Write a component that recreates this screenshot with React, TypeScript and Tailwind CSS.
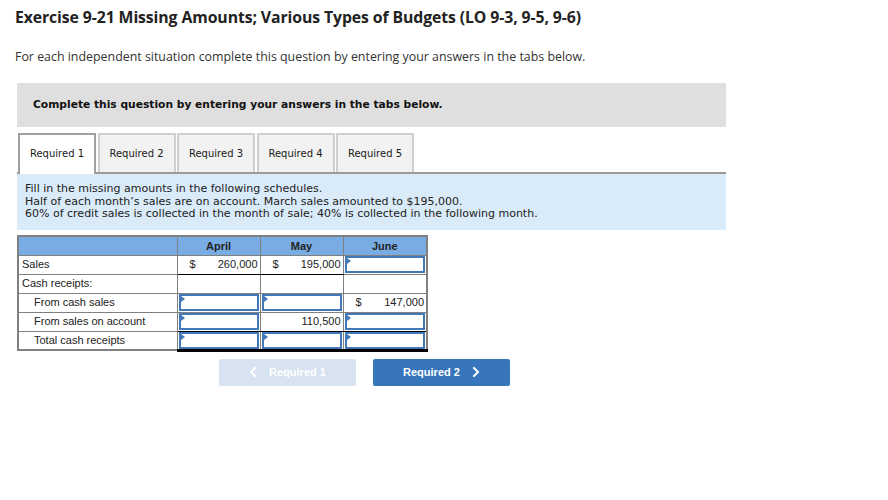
import React from 'react'

const tabs = ['Required 1', 'Required 2', 'Required 3', 'Required 4', 'Required 5']

function Input({ value, prefix }: { value?: string; prefix?: boolean }) {
  return (
    <div className="relative h-[17px] border-2 border-[#4277b8] bg-white flex items-center justify-end pr-[1px]">
      <span className="absolute left-0 top-0 w-0 h-0 border-t-[3px] border-b-[3px] border-l-[4px] border-t-transparent border-b-transparent border-l-[#4277b8]" />
      {prefix && <span className="absolute left-[8px]">$</span>}
      {value}
    </div>
  )
}

function Amount({ value, dollar }: { value: string; dollar?: boolean }) {
  return (
    <div className="flex justify-between px-[2px] h-[17px] items-center">
      <span className="pl-[10px]">{dollar ? '$' : ''}</span>
      <span>{value}</span>
    </div>
  )
}

function Chevron({ left }: { left?: boolean }) {
  return (
    <svg width="8" height="10" viewBox="0 0 8 10" fill="none">
      <path
        d={left ? 'M6 1 L2 5 L6 9' : 'M2 1 L6 5 L2 9'}
        stroke="currentColor"
        strokeWidth="2"
        strokeLinecap="square"
      />
    </svg>
  )
}

export default function App() {
  const cell = 'border border-[#808080] p-0 h-[19px] align-middle'
  return (
    <div className="w-[888px] h-[500px] bg-white text-[#1a1a1a]">
      <div className="pl-[15px] pt-[7px]">
        <h1 className="font-['Open_Sans',sans-serif] font-bold text-[15.8px] leading-[20px] text-[#222] tracking-[-0.1px]">
          Exercise 9-21 Missing Amounts; Various Types of Budgets (LO 9-3, 9-5, 9-6)
        </h1>
        <p className="font-['Open_Sans',sans-serif] text-[12.4px] leading-[17px] mt-[21px] text-[#333]">
          For each independent situation complete this question by entering your answers in the tabs below.
        </p>
      </div>

      <div className="ml-[17px] w-[709px] mt-[18px] h-[44px] bg-[#dfdfdf] pl-[16px] flex items-center font-['DejaVu_Sans',Verdana,sans-serif] font-bold text-[10.7px] text-[#111]">
        Complete this question by entering your answers in the tabs below.
      </div>

      <div className="ml-[17px] w-[709px] mt-[6px]">
        <div className="flex items-start gap-[1.5px] border-b-2 border-[#9a9a9a] pl-[1px]">
          {tabs.map((t, i) => (
            <div
              key={t}
              className={
                'w-[78px] flex items-center justify-center font-["DejaVu_Sans",Verdana,sans-serif] text-[10px] border-t-2 border-x-2 ' +
                (i === 0 ? 'bg-white border-[#a0a0a0] -mb-[2px] h-[41px] pb-[2px]' : 'h-[39px] bg-[#f2f2f2] border-[#cfcfcf]')
              }
            >
              {t}
            </div>
          ))}
        </div>
        <div className="bg-[#d9eaf8] h-[56px] pl-[8px] pt-[9px] font-['DejaVu_Sans',Verdana,sans-serif] text-[11px] leading-[12.5px] text-[#222]">
          <div>Fill in the missing amounts in the following schedules.</div>
          <div>Half of each month’s sales are on account. March sales amounted to $195,000.</div>
          <div>60% of credit sales is collected in the month of sale; 40% is collected in the following month.</div>
        </div>
      </div>

      <table className="ml-[17px] mt-[5px] border-collapse font-['Liberation_Sans',Arial,sans-serif] text-[11px] text-[#222] table-fixed border-2 border-[#808080]">
        <colgroup>
          <col className="w-[159px]" />
          <col className="w-[83px]" />
          <col className="w-[83px]" />
          <col className="w-[84px]" />
        </colgroup>
        <thead>
          <tr className="bg-[#79ace3]">
            <th className={cell}></th>
            <th className={cell + ' font-bold text-center'}>April</th>
            <th className={cell + ' font-bold text-center'}>May</th>
            <th className={cell + ' font-bold text-center'}>June</th>
          </tr>
        </thead>
        <tbody>
          <tr>
            <td className={cell + ' pl-[3px]'}>Sales</td>
            <td className={cell + ' border-b-black'}><Amount dollar value="260,000" /></td>
            <td className={cell + ' border-b-black'}><Amount dollar value="195,000" /></td>
            <td className={cell + ' px-[1px]'}><Input /></td>
          </tr>
          <tr>
            <td className={cell + ' pl-[3px]'}>Cash receipts:</td>
            <td className={cell}></td>
            <td className={cell}></td>
            <td className={cell}></td>
          </tr>
          <tr>
            <td className={cell + ' pl-[15px]'}>From cash sales</td>
            <td className={cell + ' px-[1px]'}><Input /></td>
            <td className={cell + ' px-[1px]'}><Input /></td>
            <td className={cell}><Amount dollar value="147,000" /></td>
          </tr>
          <tr>
            <td className={cell + ' pl-[15px]'}>From sales on account</td>
            <td className={cell + ' px-[1px] border-b-black'}><Input /></td>
            <td className={cell + ' border-b-black'}><Amount value="110,500" /></td>
            <td className={cell + ' px-[1px] border-b-black'}><Input /></td>
          </tr>
          <tr>
            <td className={cell + ' pl-[15px]'}>Total cash receipts</td>
            <td className={cell + ' px-[1px] border-b-[3px] border-b-black'}><Input /></td>
            <td className={cell + ' px-[1px] border-b-[3px] border-b-black'}><Input /></td>
            <td className={cell + ' px-[1px] border-b-[3px] border-b-black'}><Input /></td>
          </tr>
        </tbody>
      </table>

      <div className="flex gap-[17px] ml-[219px] mt-[7px] font-['Liberation_Sans',Arial,sans-serif] font-bold text-[11px] text-white">
        <button className="w-[137px] h-[27px] rounded-[2px] bg-[#d7e3f0] flex items-center justify-center gap-[12px]">
          <Chevron left />
          <span>Required 1</span>
        </button>
        <button className="w-[137px] h-[27px] rounded-[2px] bg-[#3776bb] flex items-center justify-center gap-[12px]">
          <span>Required 2</span>
          <Chevron />
        </button>
      </div>
    </div>
  )
}
